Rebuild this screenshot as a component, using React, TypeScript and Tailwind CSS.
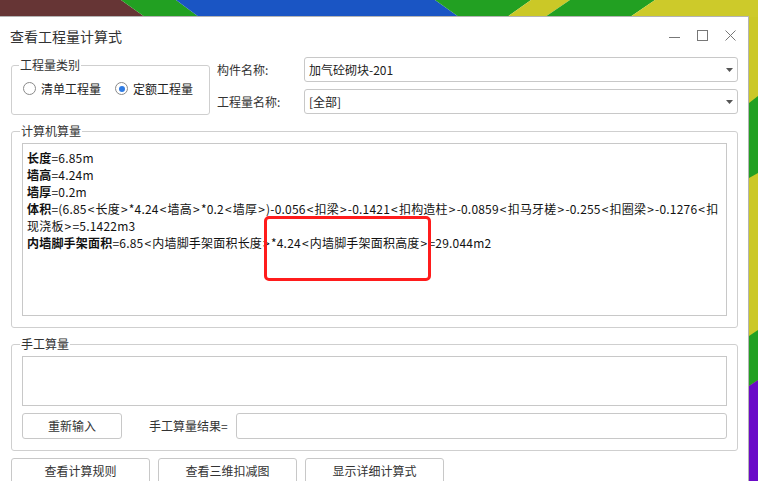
import React from 'react';

const Wallpaper: React.FC = () => (
    <svg
        className="absolute inset-0"
        width="758"
        height="481"
        viewBox="0 0 758 481"
    >
        {/* right edge */}
        <rect x="740" y="0" width="18" height="481" fill="#cbc827" />
        <polygon points="740,110 758,96 758,173 740,183" fill="#22a022" />
        <polygon points="740,342 758,330 758,380 740,392" fill="#22a022" />
        <polygon points="740,392 758,380 758,481 740,481" fill="#6a0ac8" />
        {/* top edge */}
        <polygon points="0,0 121,0 145,17 0,17" fill="#663535" />
        <polygon points="121,0 176,0 199,17 145,17" fill="#22a022" />
        <polygon points="176,0 435,0 459,17 199,17" fill="#1a55c4" />
        <polygon points="435,0 531,0 507,17 459,17" fill="#22a022" />
        <polygon points="531,0 570,0 545,17 507,17" fill="#cbc827" />
        <polygon points="570,0 655,0 630,17 545,17" fill="#22a022" />
        <polygon points="655,0 758,0 758,17 630,17" fill="#cdca2a" />
    </svg>
);

const Select: React.FC<{ value: string }> = ({ value }) => (
    <div className="flex h-[25px] flex-1 items-center justify-between rounded-[3px] border border-[#c8c8c8] bg-white pr-[4px] pl-[4px] text-[12px] text-[#222]">
        <span>{value}</span>
        <svg width="7" height="4" viewBox="0 0 7 4">
            <path d="M0 0h7L3.5 4z" fill="#555" />
        </svg>
    </div>
);

const Radio: React.FC<{ label: string; checked?: boolean }> = ({
    label,
    checked,
}) => (
    <div className="flex items-center gap-[5px]">
        <span className="flex h-[13px] w-[13px] items-center justify-center rounded-full border border-[#8a8a8a] bg-white">
            {checked && (
                <span className="h-[6px] w-[6px] rounded-full bg-[#2f7be3]" />
            )}
        </span>
        <span className="text-[12px] leading-[17px] text-[#222]">{label}</span>
    </div>
);

const Button: React.FC<{ label: string; className?: string }> = ({
    label,
    className = '',
}) => (
    <div
        className={`flex h-[26px] items-center justify-center rounded-[3px] border border-[#c8c8c8] bg-white text-[12px] text-[#333] ${className}`}
    >
        {label}
    </div>
);

// 公式里的 < > 比默认字形略宽
const Formula: React.FC<{ text: string }> = ({ text }) => (
    <>
        {text.split(/([<>])/).map((part, i) =>
            part === '<' || part === '>' ? (
                <span key={i} className="mx-[1px]">
                    {part}
                </span>
            ) : (
                part
            ),
        )}
    </>
);

const Line: React.FC<{ name?: string; text: string }> = ({ name, text }) => (
    <div>
        {name && <span className="font-semibold">{name}</span>}
        <Formula text={text} />
    </div>
);

const App: React.FC = () => {
    return (
        <div className="relative h-[481px] w-[758px] overflow-hidden font-['Noto_Sans_CJK_SC','Noto_Sans',sans-serif]">
            <Wallpaper />

            <div className="relative mt-[16px] w-[749px] border-t border-r border-[#b4b4b4] bg-white pr-[10px] pl-[11px] text-[#333]">
                {/* title bar */}
                <div className="flex h-[40px] items-start justify-between">
                    <span className="-ml-[1px] pt-[9px] text-[14px] leading-[20px]">
                        查看工程量计算式
                    </span>
                    <div className="mt-[13px] mr-[2px] flex gap-[17px]">
                        <svg width="11" height="11" viewBox="0 0 11 11">
                            <path d="M0 7.5h11" stroke="#777" />
                        </svg>
                        <svg width="11" height="11" viewBox="0 0 11 11">
                            <rect
                                x="0.5"
                                y="0.5"
                                width="10"
                                height="10"
                                fill="none"
                                stroke="#777"
                            />
                        </svg>
                        <svg width="11" height="11" viewBox="0 0 11 11">
                            <path d="M0.5 0.5l10 10M10.5 0.5l-10 10" stroke="#777" />
                        </svg>
                    </div>
                </div>

                {/* top section */}
                <div className="flex h-[58px]">
                    <fieldset className="h-[58px] w-[199px] rounded-[3px] border border-[#cfcfcf]">
                        <legend className="ml-[7px] px-px text-[12px] leading-[16px] text-[#333]">
                            工程量类别
                        </legend>
                        <div className="mt-[7px] flex gap-[14px] pl-[11px]">
                            <Radio label="清单工程量" />
                            <Radio label="定额工程量" checked />
                        </div>
                    </fieldset>
                    <div className="ml-[7px] flex flex-1 flex-col gap-[7px] text-[12px]">
                        <div className="flex items-center">
                            <span className="w-[87px]">构件名称:</span>
                            <Select value="加气砼砌块-201" />
                        </div>
                        <div className="flex items-center">
                            <span className="w-[87px]">工程量名称:</span>
                            <Select value="[全部]" />
                        </div>
                    </div>
                </div>

                {/* 计算机算量 */}
                <fieldset className="mt-[8px] rounded-[3px] border border-[#cfcfcf] px-[10px] pb-[11px]">
                    <legend className="ml-[-2px] px-px text-[12px] leading-[16px] text-[#333]">
                        计算机算量
                    </legend>
                    <div className="relative mt-[4px] h-[173px] border border-[#c8c8c8] bg-white px-[4px] pt-[5px] text-[12px] leading-[17px] tracking-[0.2px] whitespace-nowrap text-[#111]">
                        <Line name="长度" text="=6.85m" />
                        <Line name="墙高" text="=4.24m" />
                        <Line name="墙厚" text="=0.2m" />
                        <Line
                            name="体积"
                            text="=(6.85<长度>*4.24<墙高>*0.2<墙厚>)-0.056<扣梁>-0.1421<扣构造柱>-0.0859<扣马牙槎>-0.255<扣圈梁>-0.1276<扣"
                        />
                        <Line text="现浇板>=5.1422m3" />
                        <Line
                            name="内墙脚手架面积"
                            text="=6.85<内墙脚手架面积长度>*4.24<内墙脚手架面积高度>=29.044m2"
                        />
                        {/* highlight */}
                        <div className="absolute top-[72px] left-[241px] h-[65px] w-[167px] rounded-[5px] border-[3px] border-[#ff1c1c]" />
                    </div>
                </fieldset>

                {/* 手工算量 */}
                <fieldset className="mt-[8px] rounded-[3px] border border-[#cfcfcf] px-[10px] pb-[11px]">
                    <legend className="ml-[-2px] px-px text-[12px] leading-[16px] text-[#333]">
                        手工算量
                    </legend>
                    <div className="mt-[4px] h-[50px] border border-[#c8c8c8] bg-white" />
                    <div className="mt-[7px] flex items-center">
                        <Button label="重新输入" className="w-[100px]" />
                        <span className="ml-[27px] text-[12px] text-[#333]">
                            手工算量结果=
                        </span>
                        <div className="ml-[8px] h-[26px] flex-1 rounded-[3px] border border-[#c8c8c8] bg-white" />
                    </div>
                </fieldset>

                {/* bottom buttons */}
                <div className="mt-[7px] flex gap-[8px]">
                    <Button label="查看计算规则" className="w-[139px]" />
                    <Button label="查看三维扣减图" className="w-[139px]" />
                    <Button label="显示详细计算式" className="w-[139px]" />
                </div>
            </div>
        </div>
    );
};

export default App;
